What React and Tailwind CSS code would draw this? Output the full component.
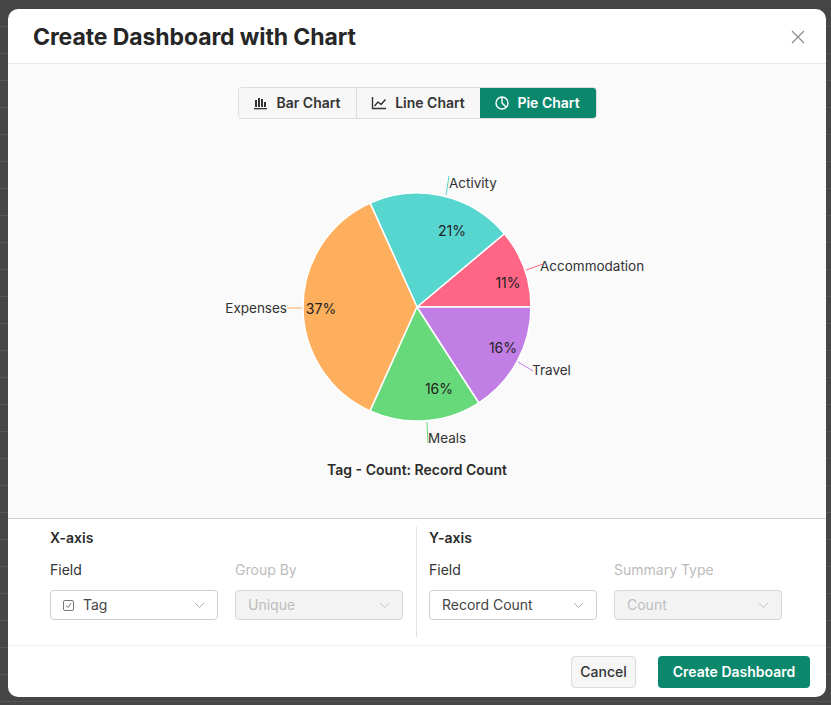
import React from 'react';

const slices = [
  { name: 'Accommodation', value: 7, color: '#ff6584' },
  { name: 'Activity', value: 13, color: '#57d5cf' },
  { name: 'Expenses', value: 23, color: '#feaf5d' },
  { name: 'Meals', value: 10, color: '#68d97a' },
  { name: 'Travel', value: 10, color: '#c17fe6' },
];

// label spots, in svg coords (cx 230, cy 142)
const pctSpots = [
  [321, 117],
  [265, 65],
  [134, 143],
  [252, 223],
  [316, 182],
];

const outer = [
  { x: 353, y: 101, anchor: 'start', line: [339, 105, 356, 99] },
  { x: 262, y: 18, anchor: 'start', line: [259, 30, 262, 11] },
  { x: 100, y: 143, anchor: 'end', line: [100, 143, 115, 143] },
  { x: 241, y: 273, anchor: 'start', line: [240, 257, 241, 278] },
  { x: 345, y: 205, anchor: 'start', line: [331, 197, 346, 206] },
];

function PieChart() {
  const cx = 230;
  const cy = 142;
  const r = 114;
  const total = slices.reduce((s, x) => s + x.value, 0);
  let start = 0;
  const paths = slices.map((s) => {
    const a0 = (start / total) * Math.PI * 2;
    start += s.value;
    const a1 = (start / total) * Math.PI * 2;
    const x0 = cx + r * Math.cos(a0);
    const y0 = cy - r * Math.sin(a0);
    const x1 = cx + r * Math.cos(a1);
    const y1 = cy - r * Math.sin(a1);
    const large = a1 - a0 > Math.PI ? 1 : 0;
    return `M${cx} ${cy} L${x0} ${y0} A${r} ${r} 0 ${large} 0 ${x1} ${y1} Z`;
  });

  return (
    <svg width="460" height="290" viewBox="0 0 460 290" className="block">
      {slices.map((s, i) => (
        <path key={s.name} d={paths[i]} fill={s.color} stroke="#ffffff" strokeWidth="1.5" strokeLinejoin="round" />
      ))}
      {slices.map((s, i) => (
        <text
          key={s.name + 'p'}
          x={pctSpots[i][0]}
          y={pctSpots[i][1]}
          textAnchor="middle"
          dominantBaseline="central"
          fontSize="14"
          fill="#222"
        >
          {Math.round((s.value / total) * 100)}%
        </text>
      ))}
      {slices.map((s, i) => {
        const o = outer[i];
        return (
          <g key={s.name + 'o'}>
            <line x1={o.line[0]} y1={o.line[1]} x2={o.line[2]} y2={o.line[3]} stroke={s.color} strokeWidth="1" />
            <text x={o.x} y={o.y} textAnchor={o.anchor} dominantBaseline="central" fontSize="13.5" fill="#333">
              {s.name}
            </text>
          </g>
        );
      })}
    </svg>
  );
}

function BarIcon() {
  return (
    <svg width="15" height="14" viewBox="0 0 15 14" fill="currentColor">
      <rect x="2" y="4" width="2" height="7" />
      <rect x="5" y="2" width="2" height="9" />
      <rect x="8" y="3" width="2" height="8" />
      <rect x="11" y="6" width="2" height="5" />
      <rect x="1" y="12" width="13" height="1.3" />
    </svg>
  );
}

function LineIcon() {
  return (
    <svg width="16" height="14" viewBox="0 0 16 14" fill="none" stroke="currentColor" strokeWidth="1.4">
      <path d="M1.5 1v11.5H15" />
      <path d="M3.5 10l3.5-4 3 2.5 4.5-5" strokeLinejoin="round" />
    </svg>
  );
}

function PieIcon() {
  return (
    <svg width="14" height="14" viewBox="0 0 14 14" fill="none" stroke="currentColor" strokeWidth="1.4">
      <circle cx="7" cy="7" r="6" />
      <path d="M7 1v6l3.8 3.8" strokeLinejoin="round" />
    </svg>
  );
}

function Chevron({ color = '#bbb' }) {
  return (
    <svg width="11" height="7" viewBox="0 0 11 7" fill="none" stroke={color} strokeWidth="1">
      <path d="M1 1l4.5 4.5L10 1" />
    </svg>
  );
}

function Select({ value, disabled, icon }) {
  return (
    <div
      className={
        'flex h-[30px] w-[168px] items-center justify-between rounded-[4px] border pl-3 pr-[12px] text-sm ' +
        (disabled ? 'border-[#d6d6d6] bg-[#f3f3f3] text-[#bdbdbd]' : 'border-[#cfcfcf] bg-white text-[#444]')
      }
    >
      <span className="flex items-center gap-[9px]">
        {icon ? (
          <svg width="11" height="11" viewBox="0 0 11 11" fill="none" stroke="#777" strokeWidth="1">
            <rect x="0.5" y="0.5" width="10" height="10" rx="1.5" />
            <path d="M3 5.5l2 2 3.2-4.5" />
          </svg>
        ) : null}
        {value}
      </span>
      <Chevron color={disabled ? '#c4c4c4' : '#b5b5b5'} />
    </div>
  );
}

function AxisColumn({ title, fieldValue, fieldIcon, secondLabel, secondValue }) {
  return (
    <div className="flex flex-col">
      <div className="h-5 text-sm font-semibold leading-5 text-[#2b2b2b]">{title}</div>
      <div className="mt-3 flex gap-[17px]">
        <div className="flex flex-col">
          <div className="h-5 text-sm leading-5 text-[#333]">Field</div>
          <div className="mt-[10px]">
            <Select value={fieldValue} icon={fieldIcon} />
          </div>
        </div>
        <div className="flex flex-col">
          <div className="h-5 text-sm leading-5 text-[#bcbcbc]">{secondLabel}</div>
          <div className="mt-[10px]">
            <Select value={secondValue} disabled />
          </div>
        </div>
      </div>
    </div>
  );
}

export default function App() {
  return (
    <div
      className="h-[705px] w-[831px] bg-[#464646] bg-[repeating-linear-gradient(to_bottom,transparent_0px,transparent_26px,#555555_26px,#555555_27px)] pl-2 pt-[9px]"
      style={{ fontFamily: 'Inter, "Noto Sans", sans-serif' }}
    >
      <div className="flex h-[688px] w-[818px] flex-col overflow-hidden rounded-[10px] bg-white">
        {/* header */}
        <div className="flex h-[55px] shrink-0 items-center justify-between border-b border-[#e9e9e9] pl-[25px] pr-[21px]">
          <h1 className="mt-[2px] text-[23px] font-bold tracking-[-0.1px] text-[#262626]">Create Dashboard with Chart</h1>
          <svg width="14" height="14" viewBox="0 0 14 14" fill="none" stroke="#8c8c8c" strokeWidth="1.2" className="mt-[2px]">
            <path d="M1 1l12 12M13 1L1 13" />
          </svg>
        </div>

        {/* chart panel */}
        <div className="flex h-[454px] shrink-0 flex-col items-center bg-[#fafafa] pt-[23px]">
          <div className="flex h-[32px] overflow-hidden rounded-[4px] border border-[#dedede] text-sm font-semibold">
            <div className="flex w-[117px] items-center justify-center gap-2 bg-[#f7f7f7] text-[#333]">
              <BarIcon />
              Bar Chart
            </div>
            <div className="flex w-[124px] items-center justify-center gap-2 border-l border-[#dedede] bg-[#f7f7f7] text-[#333]">
              <LineIcon />
              Line Chart
            </div>
            <div className="flex w-[116px] items-center justify-center gap-2 bg-[#0b876c] text-white">
              <PieIcon />
              Pie Chart
            </div>
          </div>
          <div className="mt-[46px]">
            <PieChart />
          </div>
          <div className="mt-[5px] h-5 text-sm font-semibold leading-5 text-[#2b2b2b]">Tag - Count: Record Count</div>
        </div>

        {/* axis settings */}
        <div className="flex h-[127px] shrink-0 border-t border-[#d2d2d2] py-2 pl-[42px]">
          <div className="w-[366px] pt-[1px]">
            <AxisColumn title="X-axis" fieldValue="Tag" fieldIcon secondLabel="Group By" secondValue="Unique" />
          </div>
          <div className="w-px bg-[#e2e2e2]" />
          <div className="pl-[12px] pt-[1px]">
            <AxisColumn title="Y-axis" fieldValue="Record Count" secondLabel="Summary Type" secondValue="Count" />
          </div>
        </div>

        {/* footer */}
        <div className="flex flex-1 items-center justify-end gap-[22px] border-t border-[#efefef] pr-[16px]">
          <button className="h-8 w-[65px] rounded-[4px] border border-[#dcdcdc] bg-[#f6f6f6] text-sm font-medium text-[#333]">
            Cancel
          </button>
          <button className="h-8 w-[152px] rounded-[4px] bg-[#0b876c] text-sm font-semibold text-white">
            Create Dashboard
          </button>
        </div>
      </div>
    </div>
  );
}
